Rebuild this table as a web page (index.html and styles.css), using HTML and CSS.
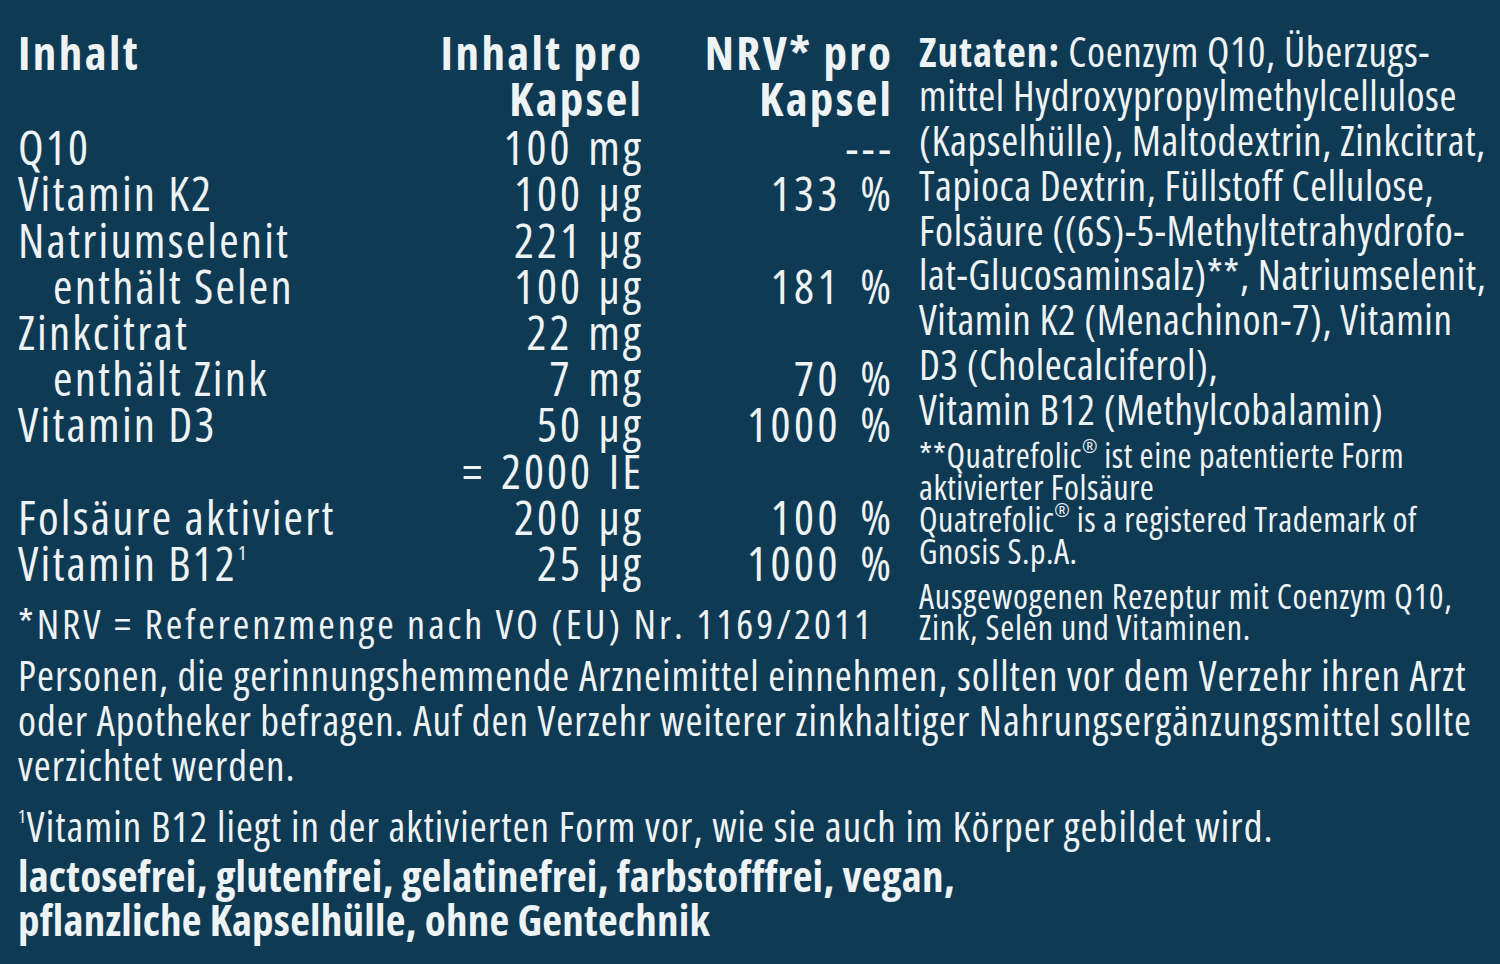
FILE: index.html
```html
<!DOCTYPE html>
<html lang="de">
<head>
<meta charset="utf-8">
<title>Coenzym Q10 – Nährwerte</title>
<link rel="stylesheet" href="styles.css">
</head>
<body>
<main class="label">
  <div class="top">
    <div class="left">
      <div class="nut nut-head">
        <div class="c1 head">Inhalt</div>
        <div class="c2 head">Inhalt pro<br>Kapsel</div>
        <div class="c3 head">NRV* pro<br>Kapsel</div>
      </div>
      <div class="nut nut-body">
        <div class="c1">Q10</div>
        <div class="c2">100 mg</div>
        <div class="c3">---</div>

        <div class="c1">Vitamin K2</div>
        <div class="c2">100 µg</div>
        <div class="c3">133 %</div>

        <div class="c1">Natriumselenit</div>
        <div class="c2">221 µg</div>
        <div class="c3"></div>

        <div class="c1 sub">enthält Selen</div>
        <div class="c2">100 µg</div>
        <div class="c3">181 %</div>

        <div class="c1">Zinkcitrat</div>
        <div class="c2">22 mg</div>
        <div class="c3"></div>

        <div class="c1 sub">enthält Zink</div>
        <div class="c2">7 mg</div>
        <div class="c3">70 %</div>

        <div class="c1">Vitamin D3</div>
        <div class="c2">50 µg<br>= 2000 IE</div>
        <div class="c3">1000 %</div>

        <div class="c1">Folsäure aktiviert</div>
        <div class="c2">200 µg</div>
        <div class="c3">100 %</div>

        <div class="c1">Vitamin B12<span class="sup">1</span></div>
        <div class="c2">25 µg</div>
        <div class="c3">1000 %</div>
      </div>
      <p class="nrv">*NRV = Referenzmenge nach VO (EU) Nr. 1169/2011</p>
    </div>

    <div class="right">
      <p class="ingr"><b class="ingr-title">Zutaten:</b> Coenzym Q10, Überzugs-<br>mittel Hydroxypropylmethylcellulose<br>(Kapselhülle), Maltodextrin, Zinkcitrat,<br>Tapioca Dextrin, Füllstoff Cellulose,<br>Folsäure ((6S)-5-Methyltetrahydrofo-<br>lat-Glucosaminsalz)**, Natriumselenit,<br>Vitamin K2 (Menachinon-7), Vitamin<br>D3 (Cholecalciferol),<br>Vitamin B12 (Methylcobalamin)</p>
      <p class="note">**Quatrefolic<span class="reg">®</span> ist eine patentierte Form<br>aktivierter Folsäure<br>Quatrefolic<span class="reg">®</span> is a registered Trademark of<br>Gnosis S.p.A.</p>
      <p class="note note-2">Ausgewogenen Rezeptur mit Coenzym Q10,<br>Zink, Selen und Vitaminen.</p>
    </div>
  </div>

  <p class="warn">Personen, die gerinnungshemmende Arzneimittel einnehmen, sollten vor dem Verzehr ihren Arzt<br>oder Apotheker befragen. Auf den Verzehr weiterer zinkhaltiger Nahrungsergänzungsmittel sollte<br>verzichtet werden.</p>
  <p class="foot"><span class="sup sup-small">1</span>Vitamin B12 liegt in der aktivierten Form vor, wie sie auch im Körper gebildet wird.</p>
  <p class="free">lactosefrei, glutenfrei, gelatinefrei, farbstofffrei, vegan,<br>pflanzliche Kapselhülle, ohne Gentechnik</p>
</main>
</body>
</html>
```

FILE: styles.css
```css
html, body {
  margin: 0;
  padding: 0;
}

body {
  background: #0f3a54;
  color: #eef3f5;
  font-family: "Open Sans", "Liberation Sans", sans-serif;
  font-stretch: 75%;
  width: 1500px;
  height: 964px;
  overflow: hidden;
}

.label {
  padding: 0 12px 0 18px;
}

p {
  margin: 0;
  white-space: nowrap;
}

.top {
  display: flex;
  gap: 28px;
  padding-top: 28.7px;
}

.left {
  width: 873px;
  flex: none;
}

.nut {
  display: grid;
  grid-template-columns: 373px 250px 250px;
  font-size: 47px;
  line-height: 46.2px;
  letter-spacing: 2.2px;
  white-space: nowrap;
}

.nut-body {
  margin-top: 3px;
}

.c2, .c3 {
  text-align: right;
  letter-spacing: 3px;
  margin-right: -3px;
}

.c2 {
  word-spacing: 4px;
}

.c3 {
  letter-spacing: 3.5px;
  word-spacing: 7px;
  margin-right: -3.5px;
}

.head {
  font-weight: bold;
  letter-spacing: 2.4px;
}

.c2.head, .c3.head {
  letter-spacing: 2.4px;
  word-spacing: 0;
  margin-right: -2.4px;
}

.sub {
  padding-left: 35px;
}

.sup {
  font-size: 0.42em;
  line-height: 0;
  vertical-align: 1.05em;
  letter-spacing: 0;
  margin-left: 1px;
}

.sup-small {
  font-size: 0.45em;
  vertical-align: 1.05em;
  margin-left: 0;
  margin-right: 1px;
}

.nrv {
  margin-top: 14.8px;
  font-size: 40px;
  line-height: 46px;
  letter-spacing: 3px;
}

.right {
  flex: none;
}

.ingr {
  font-size: 41px;
  line-height: 44.75px;
  letter-spacing: 0.6px;
}

.ingr-title {
  letter-spacing: 1px;
}

.note {
  margin-top: 7.9px;
  font-size: 34px;
  line-height: 32px;
  letter-spacing: 0.5px;
}

.note-2 {
  margin-top: 13.9px;
  line-height: 31px;
  letter-spacing: 0.8px;
}

.reg {
  font-size: 0.55em;
  line-height: 0;
  vertical-align: 0.8em;
  letter-spacing: 0;
}

.warn {
  margin-top: 6.3px;
  font-size: 41px;
  line-height: 45px;
  letter-spacing: 1px;
}

.foot {
  margin-top: 16.2px;
  font-size: 41px;
  line-height: 45px;
  letter-spacing: 1.05px;
}

.free {
  margin-top: 4.9px;
  font-size: 43px;
  line-height: 44px;
  font-weight: bold;
  letter-spacing: 0.25px;
}
```
